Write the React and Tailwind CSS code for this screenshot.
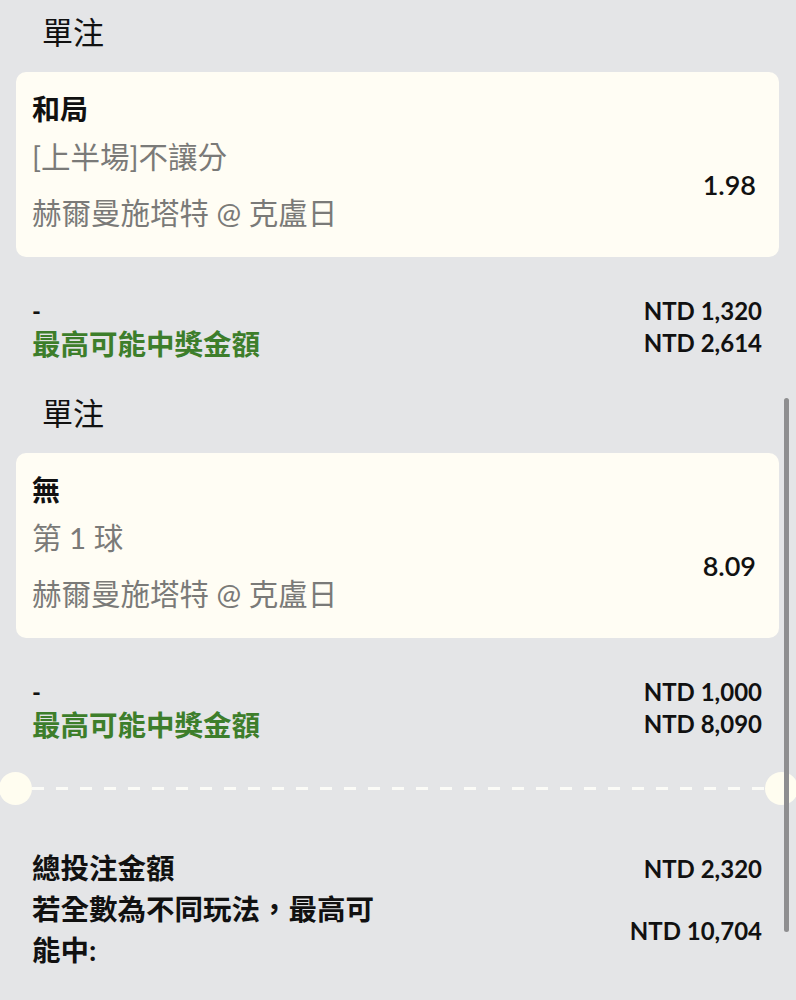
const font = { fontFamily: 'Lato, "Noto Sans CJK TC", sans-serif' };

function BetCard({ title, market, match, odds }) {
    return (
        <div className="rounded-[10px] bg-[#fffdf4] pl-[16px] pr-[23px] pt-[19px] pb-[26px]">
            <div className="text-[28px] font-bold leading-[36px] text-[#111]">{title}</div>
            <div className="mt-[12px] flex items-center justify-between">
                <div className="text-[29.5px] leading-[36px] text-[#7a7a78]">
                    <div>{market}</div>
                    <div className="mt-[20px]">{match}</div>
                </div>
                <div className="text-[27px] font-semibold text-[#111]">{odds}</div>
            </div>
        </div>
    );
}

function Summary({ stake, win }) {
    return (
        <div className="mt-[38px] flex justify-between pl-[32px] pr-[34px]">
            <div>
                <div className="text-[24px] font-bold leading-[32px] text-[#111]">-</div>
                <div className="text-[28.5px] font-bold leading-[34px] text-[#3d7e2b]">最高可能中獎金額</div>
            </div>
            <div className="text-right text-[24px] font-bold leading-[32px] text-[#111]">
                <div>{stake}</div>
                <div>{win}</div>
            </div>
        </div>
    );
}

export default function App() {
    return (
        <div className="relative h-[1000px] w-[796px] overflow-hidden bg-[#e4e5e7]" style={font}>
            <div className="px-[42px] pt-[12px] text-[31px] leading-[40px] text-[#111]">單注</div>
            <div className="mt-[20px] pl-[16px] pr-[17px]">
                <BetCard title="和局" market="[上半場]不讓分" match="赫爾曼施塔特 @ 克盧日" odds="1.98" />
            </div>
            <Summary stake="NTD 1,320" win="NTD 2,614" />

            <div className="mt-[32px] px-[42px] text-[31px] leading-[40px] text-[#111]">單注</div>
            <div className="mt-[20px] pl-[16px] pr-[17px]">
                <BetCard title="無" market="第 1 球" match="赫爾曼施塔特 @ 克盧日" odds="8.09" />
            </div>
            <Summary stake="NTD 1,000" win="NTD 8,090" />

            <div className="mt-[30px] flex items-center">
                <div className="-ml-px h-[33px] w-[33px] shrink-0 rounded-full bg-[#fffdf0]" />
                <div className="h-[3px] flex-1 bg-[repeating-linear-gradient(90deg,#fbfbf7_0px,#fbfbf7_12px,transparent_12px,transparent_24px)]" />
                <div className="-mr-[2px] h-[33px] w-[33px] shrink-0 rounded-full bg-[#fffdf0]" />
            </div>

            <div className="mt-[43px] pl-[32px] pr-[34px] text-[28.5px] font-bold leading-[41px] text-[#111]">
                <div className="flex items-center justify-between">
                    <div>總投注金額</div>
                    <div className="text-[24px]">NTD 2,320</div>
                </div>
                <div className="flex items-center justify-between">
                    <div className="w-[350px]">若全數為不同玩法，最高可能中:</div>
                    <div className="text-[24px]">NTD 10,704</div>
                </div>
            </div>

            <div className="absolute left-[784px] top-[398px] h-[534px] w-[5px] rounded-full bg-[#8e8e90]" />
        </div>
    );
}
